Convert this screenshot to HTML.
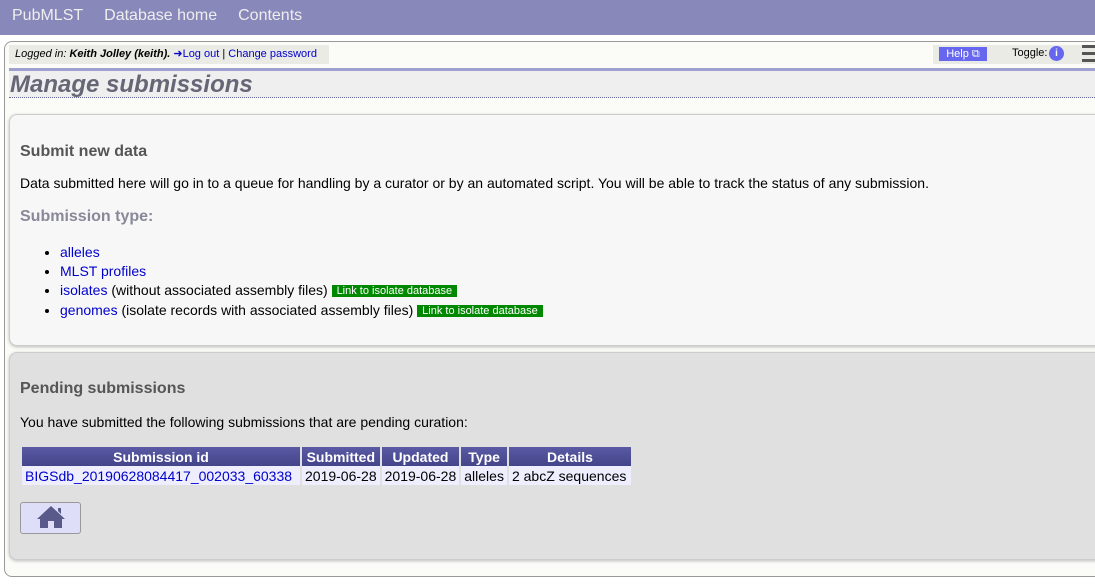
<!DOCTYPE html>
<html><head><style>
body{margin:0;width:1095px;height:588px;overflow:hidden;background:#fff;font-family:"Liberation Sans",Arial,sans-serif;font-size:14px;position:relative}
.a{position:absolute}
a{color:#00c;text-decoration:none}
.tag{background:#080;color:#fff;font-size:11px;padding:0 5px;display:inline-block;line-height:12px;vertical-align:1px}
td,th{padding:0 3px;height:19px;white-space:nowrap}
.nv span{margin-left:21px}
</style></head><body>
<div class="a" style="left:0;top:0;width:1095px;height:35px;background:#8888bb"></div>
<div class="a nv" style="left:12px;top:7px;color:#eee;font-size:16px;white-space:nowrap">PubMLST<span>Database home</span><span>Contents</span></div>
<div class="a" style="left:4px;top:41px;width:1100px;height:534px;border:1px solid #999;border-radius:8px;background:#fbfbf7"></div>
<div class="a" style="left:9px;top:45px;width:320px;height:19px;background:#ebebe6;font-size:11px;line-height:19px;padding-left:6px;box-sizing:border-box"><i>Logged in: <b>Keith Jolley (keith).</b></i> <a href="#">➜Log out</a> | <a href="#">Change password</a></div>
<div class="a" style="left:933px;top:45px;width:162px;height:19px;background:#ebebe6"></div>
<div class="a" style="left:939px;top:47px;width:48px;height:14px;background:#66e;color:#fff;font-size:11px;line-height:14px;text-align:center">Help ⧉</div>
<div class="a" style="left:1012px;top:47px;font-size:11px">Toggle:</div>
<div class="a" style="left:1049px;top:46px;width:15px;height:15px;border-radius:50%;background:#66e;color:#fff;font-size:10px;font-weight:bold;text-align:center;line-height:15px">i</div>
<div class="a" style="left:1082px;top:45px;width:13px;height:3px;background:#555;box-shadow:0 7px 0 #555,0 14px 0 #555"></div>
<div class="a" style="left:9px;top:68px;width:1086px;height:3px;background:#a0a0d0"></div>
<div class="a" style="left:9px;top:71px;width:1086px;height:26px;background:#efefef;border-bottom:1px dotted #669"></div>
<div class="a" style="left:10px;top:71px;font-size:24px;font-weight:bold;font-style:italic;color:#667">Manage submissions</div>
<div class="a" style="left:9px;top:114px;width:1100px;height:230px;background:#f7f7f7;border:1px solid #ccc;border-radius:8px;box-shadow:0 1px 3px #bbb"></div>
<div class="a" style="left:20px;top:143px;font-size:16px;font-weight:bold;color:#555">Submit new data</div>
<div class="a" style="left:20px;top:175px">Data submitted here will go in to a queue for handling by a curator or by an automated script. You will be able to track the status of any submission.</div>
<div class="a" style="left:20px;top:208px;font-size:16px;font-weight:bold;color:#889">Submission type:</div>
<ul class="a" style="left:20px;top:243px;margin:0;padding-left:40px;line-height:19px">
<li style="height:19px"><a href="#">alleles</a></li>
<li style="height:19px"><a href="#">MLST profiles</a></li>
<li style="height:20px"><a href="#">isolates</a> (without associated assembly files) <span class="tag">Link to isolate database</span></li>
<li style="height:19px"><a href="#">genomes</a> (isolate records with associated assembly files) <span class="tag">Link to isolate database</span></li>
</ul>
<div class="a" style="left:9px;top:352px;width:1100px;height:206px;background:#e0e0e0;border:1px solid #ccc;border-radius:8px;box-shadow:0 1px 3px #bbb"></div>
<div class="a" style="left:20px;top:380px;font-size:16px;font-weight:bold;color:#555">Pending submissions</div>
<div class="a" style="left:20px;top:414px">You have submitted the following submissions that are pending curation:</div>
<table class="a" style="left:20px;top:447px;border-collapse:separate;border-spacing:2px 0;font-size:14px">
<tr style="background:linear-gradient(#5a5aa5,#44448a);color:#fff"><th style="width:272px">Submission id</th><th>Submitted</th><th>Updated</th><th>Type</th><th style="width:116px">Details</th></tr>
<tr style="background:#eef"><td><a href="#">BIGSdb_20190628084417_002033_60338</a></td><td>2019-06-28</td><td>2019-06-28</td><td>alleles</td><td>2 abcZ sequences</td></tr>
</table>
<div class="a" style="left:20px;top:502px;width:59px;height:30px;background:#dedef8;border:1px solid #999;border-radius:3px"></div>
<svg class="a" style="left:35px;top:505px" width="32" height="24" viewBox="0 0 32 24"><path d="M16 1 L30 14 L27 14 L27 23 L19 23 L19 16 L13 16 L13 23 L5 23 L5 14 L2 14 Z M23 3 h3 v6 l-3 -3z" fill="#5a5a8a"/></svg>
</body></html>
